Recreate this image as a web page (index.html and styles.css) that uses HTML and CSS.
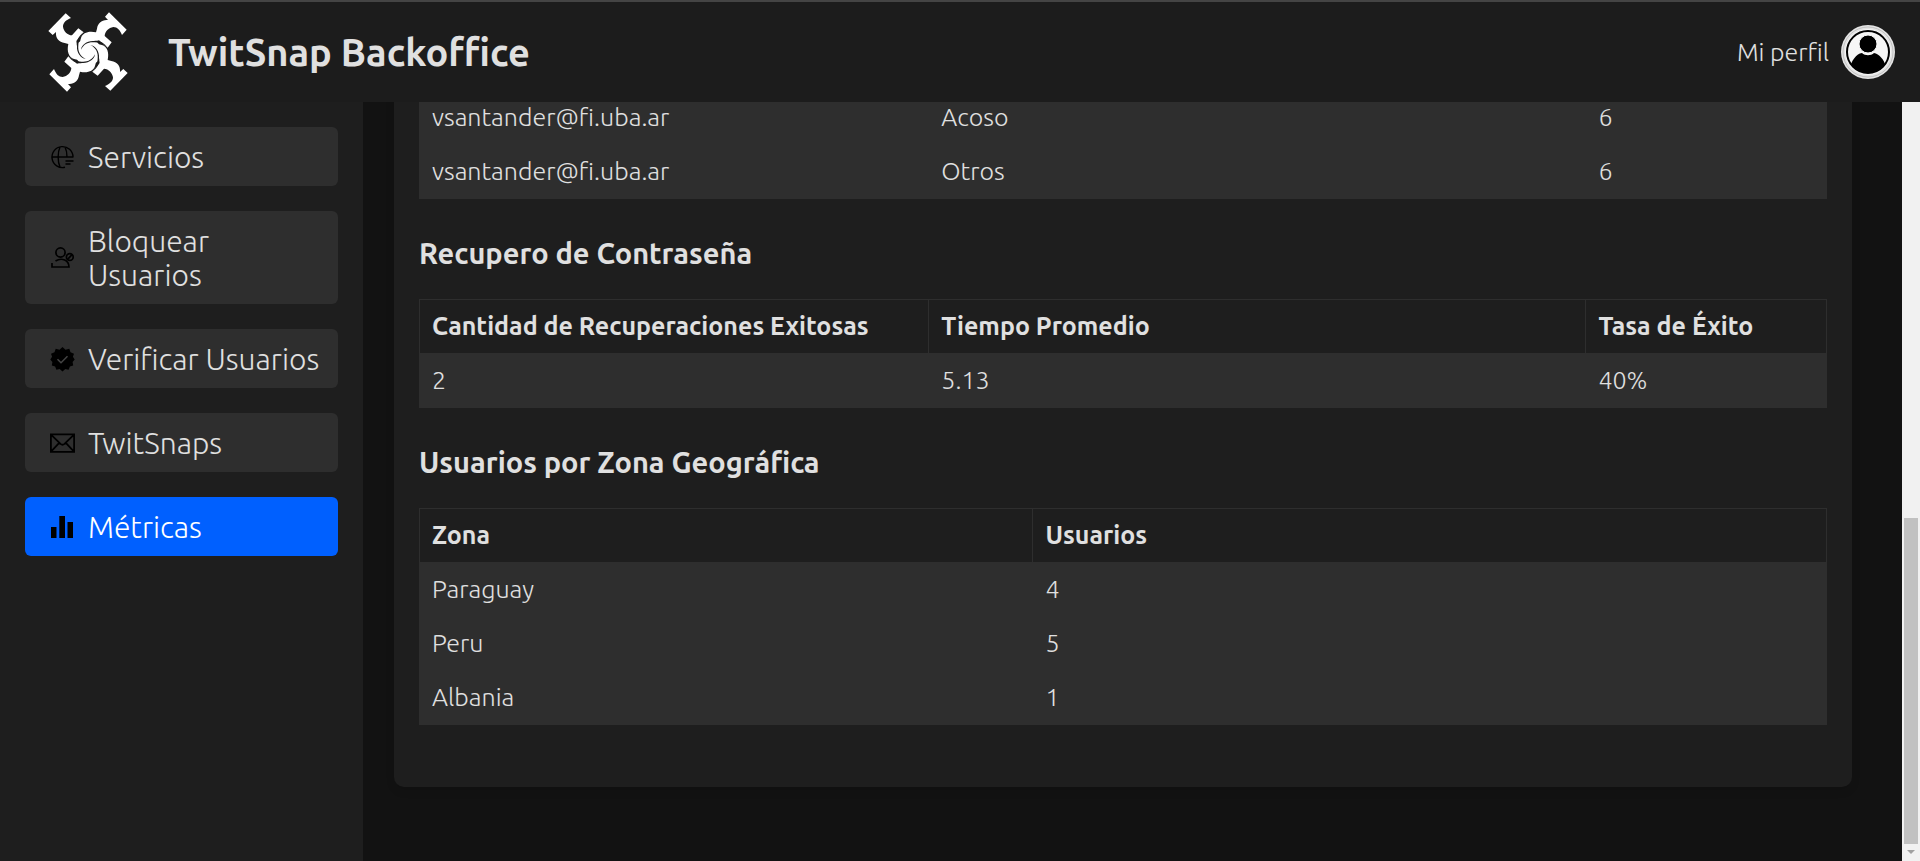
FILE: index.html
```html
<!DOCTYPE html>
<html lang="es">
<head>
<meta charset="utf-8">
<title>TwitSnap Backoffice</title>
<link rel="stylesheet" href="styles.css">
</head>
<body>
<header class="header">
  <div class="brand">
    <svg class="logo" viewBox="0 0 240 240" aria-hidden="true">
      <defs>
        <path id="arm" d="M183 1 L236 53 L222 69 C216 54 208 45 196 45 C182 47 171 58 170 72 L191 91 L179 107 L153 85 L138 89 C120 88 104 98 101 116 L120 122 C100 122 92 94 99 78 C104 62 122 56 144 61 L147 50 C149 33 162 22 180 24 L171 14 Z"/>
      </defs>
      <g fill="#fff">
        <use href="#arm"/>
        <use href="#arm" transform="rotate(90 120 120)"/>
        <use href="#arm" transform="rotate(180 120 120)"/>
        <use href="#arm" transform="rotate(270 120 120)"/>
        <circle cx="120" cy="120" r="40"/>
      </g>
      <g fill="#1c1c1c">
        <path id="gap" d="M99 113 C100 99 118 85 138 87 C152 83 166 91 180 107 C166 95 154 91 140 91 C122 89 107 96 99 113 Z"/>
        <use href="#gap" transform="rotate(90 120 120)"/>
        <use href="#gap" transform="rotate(180 120 120)"/>
        <use href="#gap" transform="rotate(270 120 120)"/>
      </g>
    </svg>
    <h1 class="title">TwitSnap Backoffice</h1>
  </div>
  <a class="profile" href="#perfil">
    <span>Mi perfil</span>
    <svg class="avatar" viewBox="0 0 54 54" aria-hidden="true">
      <defs><clipPath id="face"><circle cx="27" cy="27" r="21"/></clipPath></defs>
      <circle cx="27" cy="27" r="27" fill="#e4e4e4"/>
      <circle cx="27" cy="27" r="25" fill="none" stroke="#c2c2c2"/>
      <circle cx="27" cy="27" r="23" fill="#f6f6f6"/>
      <circle cx="27" cy="27" r="21" fill="#f6f6f6" stroke="#000" stroke-width="2"/>
      <g clip-path="url(#face)">
        <path d="M9 42 C12 32 18 28 21 28 C24 31 30 31 33 28 C38 29 43 34 45 42 L40 50 H14 Z"/>
      </g>
      <circle cx="27" cy="19" r="9" stroke="#f6f6f6"/>
    </svg>
  </a>
</header>
<div class="layout">
  <nav class="sidebar">
    <a class="item" href="#servicios">
      <svg class="icon" viewBox="0 0 25 25" fill="none" stroke="#000" stroke-width="1.4" aria-hidden="true">
        <path d="M15 22.300 A10.500 10.500 0 1 1 23 12 V12.500 M2 12 H23 M10 22 C7.500 16.500 7.500 7.500 10 2 M15 2 C16.500 5 17 8.500 17 12 M15.500 16 H23.500 M15.500 19 H20.500"/>
      </svg>
      <span>Servicios</span>
    </a>
    <a class="item" href="#bloquear">
      <svg class="icon" viewBox="0 0 25 25" fill="none" stroke="#000" stroke-width="1.700" aria-hidden="true">
        <circle cx="10.500" cy="6.500" r="4.600"/>
        <path d="M5.500 15 C12 11 19 14.500 19 21 H2 V17"/>
        <circle cx="19.800" cy="11" r="3.400"/>
        <path d="M17.600 13.300 L22 8.700"/>
      </svg>
      <span>Bloquear Usuarios</span>
    </a>
    <a class="item" href="#verificar">
      <svg class="icon" viewBox="0 0 25 25" aria-hidden="true">
        <path d="M12.500 0 L15.500 2.700 L19.300 1.700 L20.500 5.300 L24 6.700 L22.900 9.800 L24.700 12.500 L22.600 15 L23.200 18.500 L19.900 19.600 L18.600 22.800 L15.300 22.100 L12.500 24.500 L9.700 22.100 L6.400 22.800 L5.100 19.600 L1.800 18.500 L2.400 15 L0.300 12.500 L2.100 9.800 L1 6.700 L4.500 5.300 L5.700 1.700 L9.500 2.700 Z"/>
        <path d="M7.500 12.300 L11 15.700 L17.500 9.200" fill="none" stroke="#444" stroke-width="1.500"/>
      </svg>
      <span>Verificar Usuarios</span>
    </a>
    <a class="item" href="#twitsnaps">
      <svg class="icon" viewBox="0 0 25 25" fill="none" stroke="#000" stroke-width="1.800" aria-hidden="true">
        <path d="M0.900 3.400 H24.100 V20.800 H0.900 Z M1 3.600 L10.500 12.900 Q12.500 14.600 14.500 12.900 L24 3.600 M1 20.600 L9.200 11.800 M24 20.600 L15.800 11.800"/>
      </svg>
      <span>TwitSnaps</span>
    </a>
    <a class="item active" href="#metricas" aria-current="page">
      <svg class="icon" viewBox="0 0 25 25" aria-hidden="true">
        <path d="M1 12 H6.500 V23 H1 Z M9.300 1 H15 V23 H9.300 Z M17.500 7 H23 V23 H17.500 Z"/>
      </svg>
      <span>Métricas</span>
    </a>
  </nav>
  <main class="content">
    <section class="card">
      <table class="table">
        <colgroup><col class="c1"><col class="c2"><col class="c3"></colgroup>
        <tbody>
          <tr><td>vsantander@fi.uba.ar</td><td>Acoso</td><td>6</td></tr>
          <tr><td>vsantander@fi.uba.ar</td><td>Otros</td><td>6</td></tr>
        </tbody>
      </table>
      <h3 class="subtitle">Recupero de Contraseña</h3>
      <table class="table">
        <colgroup><col class="c1"><col class="c2"><col class="c3"></colgroup>
        <thead><tr><th>Cantidad de Recuperaciones Exitosas</th><th>Tiempo Promedio</th><th>Tasa de Éxito</th></tr></thead>
        <tbody><tr><td>2</td><td>5.13</td><td>40%</td></tr></tbody>
      </table>
      <h3 class="subtitle">Usuarios por Zona Geográfica</h3>
      <table class="table">
        <colgroup><col class="z1"><col class="z2"></colgroup>
        <thead><tr><th>Zona</th><th>Usuarios</th></tr></thead>
        <tbody>
          <tr><td>Paraguay</td><td>4</td></tr>
          <tr><td>Peru</td><td>5</td></tr>
          <tr><td>Albania</td><td>1</td></tr>
        </tbody>
      </table>
    </section>
  </main>
  <div class="scrollbar" aria-hidden="true">
    <div class="thumb"></div>
    <svg class="down" viewBox="0 0 8 4"><path d="M0 0 H8 L4 4 Z"/></svg>
  </div>
</div>
</body>
</html>
```
FILE: styles.css
```css
* { box-sizing: border-box; }

body {
  margin: 0;
  height: 100vh;
  display: flex;
  flex-direction: column;
  background: #121212;
  color: #e0e0e0;
  font-family: Ubuntu, "Noto Sans", sans-serif;
  font-size: 25px;
  font-weight: 300;
  line-height: 29px;
}

a { color: inherit; text-decoration: none; }

.header {
  flex: none;
  display: flex;
  align-items: center;
  justify-content: space-between;
  height: 102px;
  padding: 0 25px 0 48px;
  border-top: 2px solid #444;
  background: #1c1c1c;
}

.brand { display: flex; align-items: center; gap: 40px; }
.logo { width: 80px; height: 80px; }
.title { margin: 0; font-size: 38px; line-height: 44px; font-weight: 600; }
.profile { display: flex; align-items: center; gap: 12px; }
.avatar { width: 54px; height: 54px; }

.layout { flex: 1; min-height: 0; display: flex; }

.sidebar {
  flex: none;
  width: 363px;
  padding: 25px;
  display: flex;
  flex-direction: column;
  gap: 25px;
  background: #1e1e1e;
}

.item {
  display: flex;
  align-items: center;
  gap: 13px;
  padding: 13px 12px 12px 25px;
  border-radius: 6px;
  background: #2e2e2e;
  font-size: 30px;
  line-height: 34px;
}
.item.active { background: #0060ff; color: #fff; }
.icon { flex: none; width: 25px; height: 25px; }

.content {
  flex: 1;
  min-width: 0;
  display: flex;
  flex-direction: column;
  justify-content: flex-end;
  overflow: hidden;
  padding: 0 50px 74px 31px;
}

.card {
  padding: 25px 25px 62px;
  border-radius: 10px;
  background: #1e1e1e;
  box-shadow: 0 4px 8px rgba(0, 0, 0, 0.1);
}

.table {
  width: 100%;
  table-layout: fixed;
  border-collapse: collapse;
}
.table th, .table td {
  padding: 12px;
  border: 1px solid #2e2e2e;
  text-align: left;
}
.table td { background: #2e2e2e; }
.table th { font-weight: 600; }
.c1 { width: 36.2%; }
.c2 { width: 46.7%; }
.c3 { width: 17.1%; }
.z1 { width: 43.6%; }
.z2 { width: 56.4%; }

.subtitle {
  margin: 37px 0 29px;
  font-size: 29px;
  line-height: 34px;
  font-weight: 600;
}

.scrollbar {
  flex: none;
  width: 18px;
  padding-bottom: 7px;
  display: flex;
  flex-direction: column;
  align-items: center;
  justify-content: flex-end;
  gap: 6px;
  background: #f1f1f1;
}
.thumb { width: 14px; height: 43.3%; background: #c1c1c1; }
.down { flex: none; width: 8px; height: 4px; fill: #a0a0a0; }
```
